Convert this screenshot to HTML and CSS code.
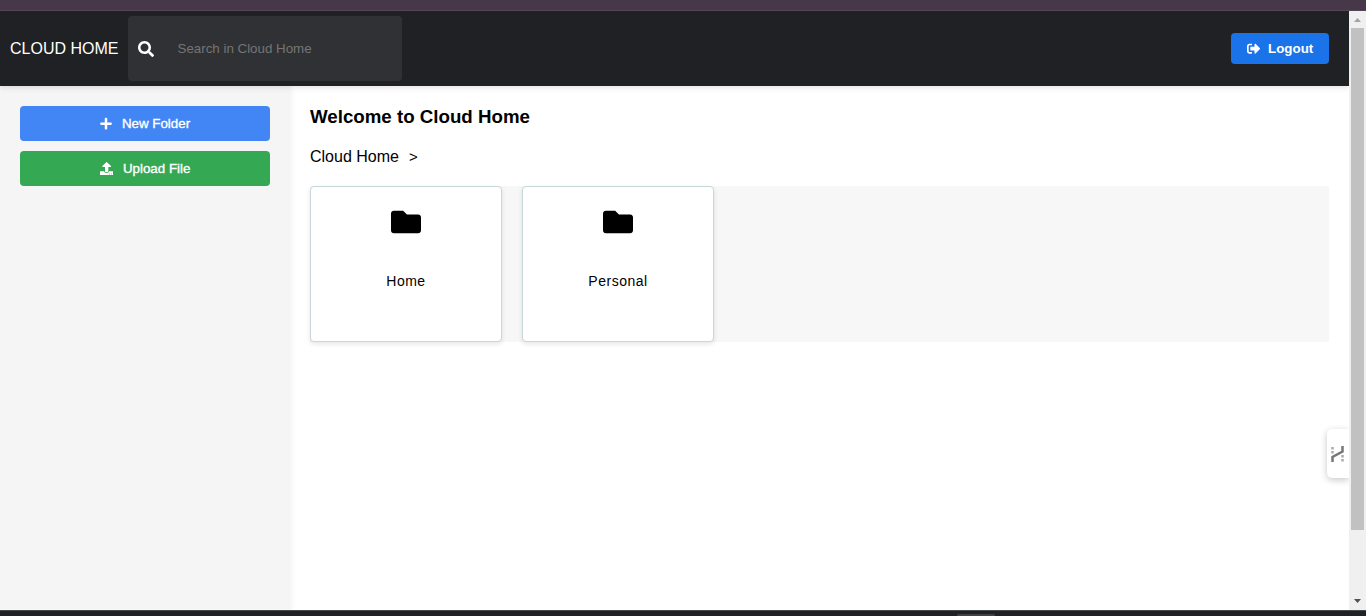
FILE: index.html
```html
<!DOCTYPE html>
<html lang="en">
<head>
<meta charset="utf-8">
<title>Cloud Home</title>
<link rel="stylesheet" href="styles.css">
</head>
<body>
<div class="window-top"></div>
<div class="viewport">
  <div class="page">
    <header class="header">
      <span class="brand">CLOUD HOME</span>
      <label class="search">
        <svg class="search-icon" viewBox="0 0 512 512"><path d="M505 442.700L405.300 343c-4.500-4.500-10.600-7-17-7H372c27.600-35.300 44-79.700 44-128C416 93.100 322.900 0 208 0S0 93.100 0 208s93.100 208 208 208c48.300 0 92.700-16.400 128-44v16.300c0 6.400 2.500 12.500 7 17l99.700 99.700c9.400 9.400 24.600 9.400 33.900 0l28.300-28.300c9.400-9.400 9.400-24.600.1-34zM208 336c-70.700 0-128-57.200-128-128 0-70.700 57.200-128 128-128 70.700 0 128 57.200 128 128 0 70.700-57.200 128-128 128z"/></svg>
        <input class="search-input" type="text" placeholder="Search in Cloud Home">
      </label>
      <button class="button logout">
        <svg class="icon" viewBox="0 0 512 512"><path d="M497 273L329 441c-15 15-41 4.500-41-17v-96H152c-13.300 0-24-10.700-24-24v-96c0-13.300 10.700-24 24-24h136V88c0-21.400 25.900-32 41-17l168 168c9.300 9.400 9.300 24.600 0 34zM192 436v-40c0-6.600-5.400-12-12-12H96c-17.700 0-32-14.300-32-32V160c0-17.700 14.300-32 32-32h84c6.600 0 12-5.400 12-12V76c0-6.600-5.400-12-12-12H96c-53 0-96 43-96 96v192c0 53 43 96 96 96h84c6.600 0 12-5.400 12-12z"/></svg>
        <span>Logout</span>
      </button>
    </header>
    <div class="body">
      <aside class="sidebar">
        <button class="button action new-folder">
          <svg class="icon plus" viewBox="0 0 448 512"><path d="M416 208H272V64c0-17.670-14.330-32-32-32h-32c-17.670 0-32 14.330-32 32v144H32c-17.670 0-32 14.330-32 32v32c0 17.670 14.330 32 32 32h144v144c0 17.670 14.330 32 32 32h32c17.670 0 32-14.330 32-32V304h144c17.670 0 32-14.330 32-32v-32c0-17.670-14.330-32-32-32z"/></svg>
          <span>New Folder</span>
        </button>
        <button class="button action upload">
          <svg class="icon" viewBox="0 0 512 512"><path d="M296 384h-80c-13.300 0-24-10.700-24-24V192h-87.700c-17.800 0-26.700-21.500-14.100-34.100L242.300 5.700c7.500-7.500 19.800-7.500 27.300 0l152.200 152.200c12.600 12.600 3.700 34.100-14.100 34.100H320v168c0 13.300-10.700 24-24 24zm216-8v112c0 13.300-10.700 24-24 24H24c-13.300 0-24-10.700-24-24V376c0-13.300 10.700-24 24-24h136v8c0 30.900 25.100 56 56 56h80c30.900 0 56-25.100 56-56v-8h136c13.300 0 24 10.700 24 24zm-124 88c0-11-9-20-20-20s-20 9-20 20 9 20 20 20 20-9 20-20zm64 0c0-11-9-20-20-20s-20 9-20 20 9 20 20 20 20-9 20-20z"/></svg>
          <span>Upload File</span>
        </button>
      </aside>
      <main class="content">
        <h1 class="title">Welcome to Cloud Home</h1>
        <nav class="crumbs"><span>Cloud Home</span><span class="crumb-sep">&gt;</span></nav>
        <section class="folders">
          <article class="card">
            <svg class="folder-icon" viewBox="0 0 512 512"><path d="M464 128H272l-64-64H48C21.490 64 0 85.490 0 112v288c0 26.510 21.490 48 48 48h416c26.510 0 48-21.490 48-48V176c0-26.510-21.490-48-48-48z"/></svg>
            <span class="card-name">Home</span>
          </article>
          <article class="card">
            <svg class="folder-icon" viewBox="0 0 512 512"><path d="M464 128H272l-64-64H48C21.490 64 0 85.490 0 112v288c0 26.510 21.490 48 48 48h416c26.510 0 48-21.490 48-48V176c0-26.510-21.490-48-48-48z"/></svg>
            <span class="card-name">Personal</span>
          </article>
        </section>
      </main>
    </div>
    <div class="side-tab">
      <svg class="side-mark" viewBox="0 0 13 18"><path class="mark-dots" d="M1.500 2v7M11.500 10v7"/><path class="mark-main" d="M1.500 17v-5L11.500 6.500V1"/></svg>
    </div>
  </div>
  <div class="scrollbar">
    <svg class="arrow arrow-up" viewBox="0 0 7 4"><path d="M0 4h7L3.500 0z"/></svg>
    <div class="thumb"></div>
    <svg class="arrow arrow-down" viewBox="0 0 7 4"><path d="M0 0h7L3.500 4z"/></svg>
  </div>
</div>
<div class="taskbar"><div class="taskbar-item"></div></div>
</body>
</html>
```

FILE: styles.css
```css
* { box-sizing: border-box; }
body {
  margin: 0;
  height: 616px;
  overflow: hidden;
  display: flex;
  flex-direction: column;
  font: 16px "Liberation Sans", Arial, sans-serif;
  color: #000;
  background: #fff;
}
.window-top { height: 11px; background: #463849; border-bottom: 1px solid #544656; }
.viewport { height: 599px; display: flex; }
.page { position: relative; flex: 1; display: flex; flex-direction: column; overflow: hidden; }
.header {
  position: relative;
  z-index: 1;
  height: 75px;
  padding: 5px 20px 5px 10px;
  display: flex;
  align-items: center;
  color: #fff;
  background: #202124;
  box-shadow: 0 2px 5px rgba(0, 0, 0, .1);
}
.brand { width: 118px; white-space: nowrap; }
.search {
  width: 274px;
  height: 65px;
  padding-left: 10px;
  display: flex;
  align-items: center;
  border-radius: 4px;
  background: #303134;
}
.search-icon { width: 16px; height: 16px; fill: #fff; }
.search-input {
  width: 200px;
  margin-left: 22px;
  padding: 0 1.500px;
  border: 0;
  outline: 0;
  color: #fff;
  background: none;
  font: 13.333px "Liberation Sans", Arial, sans-serif;
}
.search-input::placeholder { color: #757575; }
.button {
  display: flex;
  align-items: center;
  justify-content: center;
  gap: 8px;
  padding: 0;
  border: 0;
  border-radius: 4px;
  color: #fff;
  font: bold 13.333px "Liberation Sans", Arial, sans-serif;
}
.icon { width: 13.333px; height: 13.333px; fill: #fff; }
.plus { width: 12px; }
.logout { width: 98px; height: 31px; margin-left: auto; background: #1a73e8; }
.body { flex: 1; display: flex; }
.sidebar {
  width: 290px;
  padding: 20px;
  display: flex;
  flex-direction: column;
  gap: 10px;
  background: #f5f5f5;
  box-shadow: 2px 0 5px rgba(0, 0, 0, .05);
}
.action { height: 35px; gap: 10px; font-weight: 500; -webkit-text-stroke: .35px #fff; }
.new-folder { background: #4285f4; }
.upload { background: #34a853; }
.content { flex: 1; padding: 20px; }
.title { margin: 0 0 19px; font-size: 18.72px; line-height: 21px; }
.crumbs { height: 20px; margin-bottom: 20px; display: flex; gap: 10px; line-height: 22px; }
.crumb-sep { font-size: 15px; }
.folders { height: 156px; display: flex; gap: 20px; background: #f7f7f7; }
.card {
  width: 192px;
  height: 156px;
  padding-top: 20px;
  display: flex;
  flex-direction: column;
  align-items: center;
  border: 1px solid #c8d7dc;
  border-radius: 4px;
  background: #fff;
  box-shadow: 0 2px 5px rgba(0, 0, 0, .1);
}
.folder-icon { width: 30px; height: 30px; }
.card-name { margin-top: 36px; font-size: 14px; line-height: 16px; letter-spacing: .5px; }
.side-tab {
  position: absolute;
  right: 0;
  top: 418px;
  width: 22px;
  height: 49px;
  display: flex;
  align-items: center;
  padding-left: 4px;
  border-radius: 5px 0 0 5px;
  background: #fff;
  box-shadow: 0 2px 7px rgba(0, 0, 0, .22);
}
.side-mark { width: 13px; height: 18px; fill: none; stroke-width: 2.500; }
.mark-main { stroke: #777; }
.mark-dots { stroke: #aaa; stroke-dasharray: 2.500 1.500; }
.scrollbar {
  width: 17px;
  display: flex;
  flex-direction: column;
  align-items: center;
  background: #f0f0f0;
}
.arrow { width: 7px; height: 4px; }
.arrow-up { margin: 7px 0 6px; fill: #a3a3a3; }
.thumb { width: 13px; height: 502px; background: #c1c1c1; }
.arrow-down { margin: auto 0 7px; fill: #505050; }
.taskbar { height: 6px; display: flex; background: #202126; border-top: 1px solid #444a4c; }
.taskbar-item { width: 38px; height: 2px; margin: 3px 0 0 957px; border-radius: 2px 2px 0 0; background: #414145; }
```
